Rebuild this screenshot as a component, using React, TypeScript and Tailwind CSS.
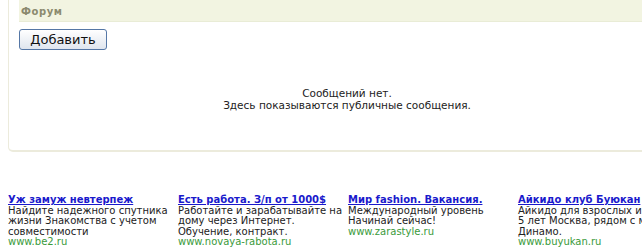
const ads = [
  {
    title: 'Уж замуж невтерпеж',
    lines: ['Найдите надежного спутника', 'жизни Знакомства с учетом', 'совместимости'],
    url: 'www.be2.ru',
  },
  {
    title: 'Есть работа. З/п от 1000$',
    lines: ['Работайте и зарабатывайте на', 'дому через Интернет.', 'Обучение, контракт.'],
    url: 'www.novaya-rabota.ru',
  },
  {
    title: 'Мир fashion. Вакансия.',
    lines: ['Международный уровень', 'Начинай сейчас!'],
    url: 'www.zarastyle.ru',
  },
  {
    title: 'Айкидо клуб Буюкан',
    lines: ['Айкидо для взрослых и детей от', '5 лет Москва, рядом с метро', 'Динамо.'],
    url: 'www.buyukan.ru',
  },
];

export default function App() {
  return (
    <div className="h-[250px] w-[642px] overflow-hidden bg-white font-['DejaVu_Sans',Verdana,sans-serif] text-[10px] text-black">
      <section className="ml-2 h-[152px] w-[667px] rounded-bl-[5px] border-b-2 border-l border-[#ecebdc] pl-[10px]">
        <header className="flex h-[22px] items-center border-b border-[#e9ecd6] bg-[#f2f4e1] pl-[2px] pt-[1px]">
          <h2 className="text-[10px] font-bold tracking-[0.6px] text-[#8b8a6e]">Форум</h2>
        </header>
        <div className="pt-[7px]">
          <button className="flex h-[21px] w-[88px] items-center justify-center rounded-[3px] border border-[#5577a6] bg-gradient-to-b from-white to-[#dfe5ee] font-['DejaVu_Sans',sans-serif] text-[13px] leading-none text-[#111]">
            Добавить
          </button>
        </div>
        <div className="mt-[37px] text-center text-[10.5px] leading-[12px] text-[#222]">
          <p>Сообщений нет.</p>
          <p>Здесь показываются публичные сообщения.</p>
        </div>
      </section>
      <div className="mt-[43px] grid grid-cols-[170px_170px_170px_170px] pl-2 text-[10px] leading-[10.5px] text-[#222]">
        {ads.map((ad) => (
          <div key={ad.url} className="whitespace-nowrap">
            <a className="font-bold text-[#1a1acc] underline">{ad.title}</a>
            {ad.lines.map((l) => (
              <div key={l}>{l}</div>
            ))}
            <div className="text-[#3a9a3a]">{ad.url}</div>
          </div>
        ))}
      </div>
    </div>
  );
}
